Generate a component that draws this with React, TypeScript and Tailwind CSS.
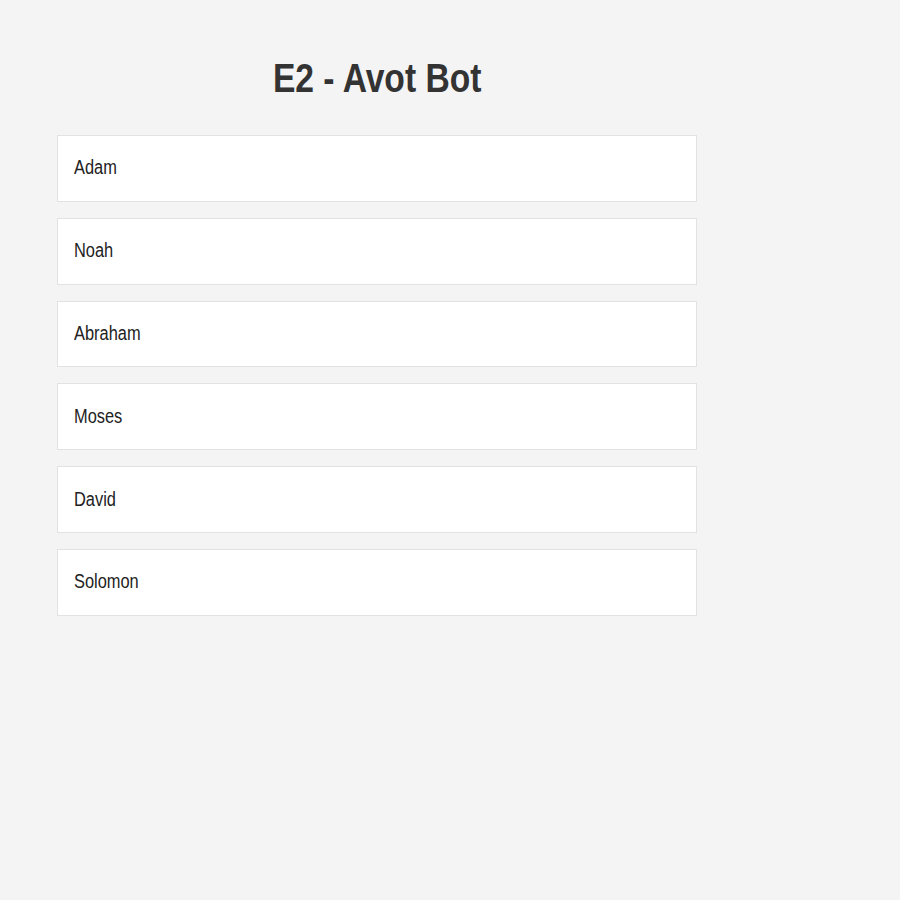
export default function App() {
  const names = ["Adam", "Noah", "Abraham", "Moses", "David", "Solomon"];
  return (
    <div
      className="min-h-screen w-full bg-[#f4f4f4] text-[#333333]"
      style={{ fontFamily: '"Liberation Sans", Arial, sans-serif' }}
    >
      <div className="ml-[57px] w-[640px] pt-[54px]">
        <h1 className="flex justify-center text-[41px] leading-[48px] font-bold text-[#333333]">
          <span className="inline-block origin-center scale-x-[0.82]">E2 - Avot Bot</span>
        </h1>
        <div className="mt-[33px] flex flex-col gap-[16px]">
          {names.map((n) => (
            <div
              key={n}
              className="flex h-[66.8px] items-center border border-[#e2e2e2] bg-white pl-[15.5px] pr-[16px] pb-[2px]"
            >
              <span className="inline-block origin-left scale-x-[0.82] text-[20px] leading-[28px] text-[#222222]">
                {n}
              </span>
            </div>
          ))}
        </div>
      </div>
    </div>
  );
}
